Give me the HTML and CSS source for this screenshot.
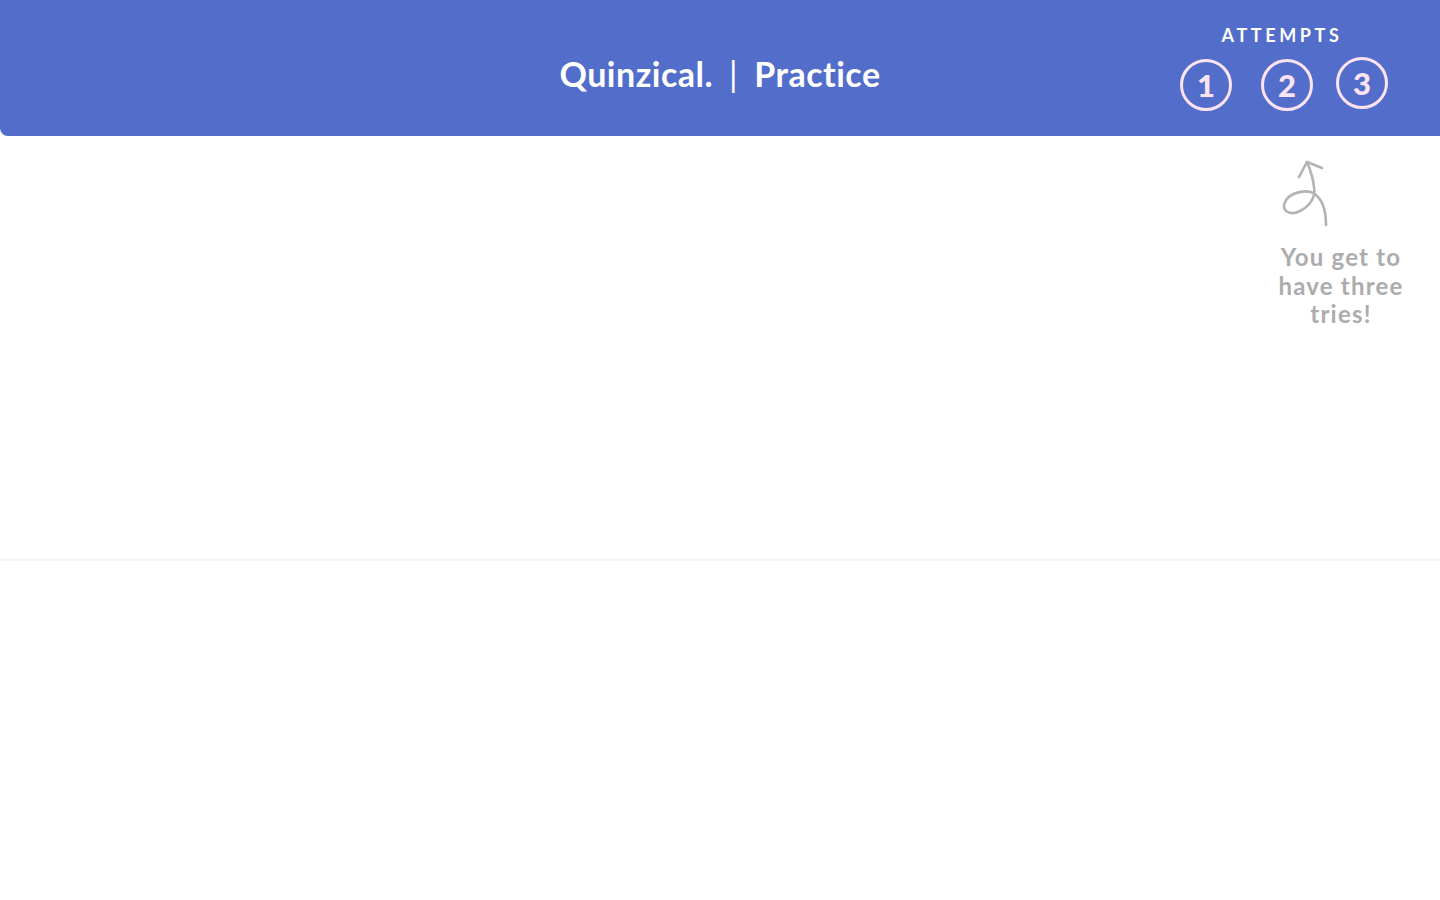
FILE: index.html
```html
<!DOCTYPE html>
<html lang="en">
<head>
<meta charset="utf-8">
<title>Quinzical | Practice</title>
<link rel="stylesheet" href="styles.css">
</head>
<body>
<header class="topbar">
  <div class="side"></div>
  <h1 class="title"><span>Quinzical.</span><span class="sep">|</span><span>Practice</span></h1>
  <div class="side side-right">
    <div class="attempts">
      <div class="attempts-label">ATTEMPTS</div>
      <div class="circles">
        <div class="circle c1">1</div>
        <div class="circle c2">2</div>
        <div class="circle c3">3</div>
      </div>
    </div>
  </div>
</header>
<main class="stage">
  <div class="hint">
    <svg class="hint-arrow" width="60" height="75" viewBox="0 0 60 75" fill="none" stroke="#b3b3b3" stroke-width="2.6" stroke-linecap="round" stroke-linejoin="round">
      <path d="M50 70 C 50 58, 47 46, 40 40 C 32 33, 14 37, 9 47 C 5 56, 14 61, 24 56 C 34 51, 40 42, 38 32 C 37 22, 34 14, 31 7"/>
      <path d="M23 22 L31 7 L46 13"/>
    </svg>
    <p class="hint-text">You get to have three tries!</p>
  </div>
</main>
</body>
</html>
```
FILE: styles.css
```css
html, body {
  margin: 0;
  padding: 0;
  background: #ffffff;
}
body {
  font-family: "Lato", "DejaVu Sans", sans-serif;
}
.topbar {
  height: 136px;
  background: #536dca;
  border-bottom-left-radius: 8px;
  display: grid;
  grid-template-columns: 1fr auto 1fr;
  align-items: start;
}
.title {
  margin: 0;
  padding-top: 54px;
  color: #ffffff;
  font-size: 34px;
  font-weight: 700;
  line-height: 40px;
  display: flex;
  gap: 16px;
  letter-spacing: 0.5px;
}
.sep {
  font-weight: 400;
}
.side-right {
  display: flex;
  justify-content: flex-end;
  padding-right: 52px;
}
.attempts {
  padding-top: 24px;
  display: flex;
  flex-direction: column;
  align-items: center;
}
.attempts-label {
  color: #ffffff;
  font-size: 18px;
  font-weight: 700;
  letter-spacing: 3.6px;
  line-height: 22px;
  margin-right: 4px;
}
.circles {
  display: flex;
  margin-top: 13px;
}
.circle {
  width: 46px;
  height: 46px;
  border: 3px solid #fbe3f2;
  border-radius: 50%;
  color: #fbe3f2;
  font-size: 31px;
  font-weight: 900;
  display: flex;
  align-items: center;
  justify-content: center;
}
.c2 {
  margin-left: 29px;
}
.c3 {
  margin-left: 23px;
  margin-top: -2px;
}
.stage {
  height: 422px;
  border-bottom: 3px solid #f6f7fc;
  display: flex;
  justify-content: flex-end;
  padding-right: 31px;
}
.hint {
  width: 136px;
  padding-top: 19px;
  display: flex;
  flex-direction: column;
  align-items: center;
}
.hint-arrow {
  display: block;
  align-self: flex-start;
  margin-left: 3px;
}
.hint-text {
  margin: 13px 0 0;
  color: #acacac;
  font-size: 24px;
  font-weight: 700;
  letter-spacing: 1.2px;
  line-height: 28.5px;
  text-align: center;
}
```
